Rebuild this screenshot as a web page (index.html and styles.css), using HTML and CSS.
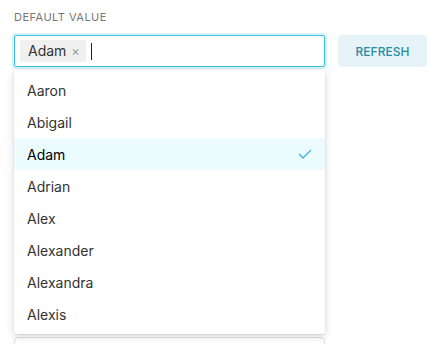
FILE: index.html
```html
<!DOCTYPE html>
<html lang="en">
<head>
  <meta charset="UTF-8" />
  <title>Default value</title>
  <link rel="stylesheet" href="styles.css">
</head>
<body>
  <div class="field">
    <label class="label">Default value</label>
    <div class="row">
      <div class="picker">
        <div class="input">
          <span class="tag">Adam <span class="tag-x">&times;</span></span>
          <span class="caret"></span>
        </div>
        <ul class="menu">
          <li>Aaron</li>
          <li>Abigail</li>
          <li class="selected">Adam
            <svg class="check" width="14" height="10" viewBox="0 0 14 10"><path d="M1 5l4 4 8-8" fill="none" stroke="#3bb8d9" stroke-width="1.4"/></svg>
          </li>
          <li>Adrian</li>
          <li>Alex</li>
          <li>Alexander</li>
          <li>Alexandra</li>
          <li>Alexis</li>
        </ul>
      </div>
      <button class="refresh">Refresh</button>
    </div>
  </div>
  <div class="next-box"></div>
</body>
</html>
```

FILE: styles.css
```css
body {
  margin: 0;
  padding: 10px 7px 0 14px;
  font-family: Inter, "Noto Sans", sans-serif;
  background: #fff;
  color: #222;
  overflow: hidden;
}
.label {
  display: block;
  font-size: 11px;
  letter-spacing: 0.5px;
  text-transform: uppercase;
  color: #777;
  line-height: 14px;
  margin-bottom: 11px;
}
.row {
  display: flex;
  gap: 13px;
}
.picker {
  position: relative;
  width: 311px;
  flex-shrink: 0;
}
.input {
  box-sizing: border-box;
  height: 32px;
  border: 1px solid #3cc3df;
  border-radius: 2px;
  box-shadow: 0 0 0 2px #d6f1f8;
  display: flex;
  align-items: center;
  padding: 0 5px;
  gap: 5px;
}
.tag {
  background: #f0f0f0;
  border-radius: 2px;
  font-size: 14px;
  color: #333;
  padding: 3px 6px 3px 8px;
  line-height: 16px;
}
.tag-x {
  color: #999;
  font-size: 13px;
  margin-left: 1px;
}
.caret {
  width: 1px;
  height: 17px;
  background: #222;
}
.menu {
  position: absolute;
  top: 35px;
  left: 0;
  right: 0;
  margin: 0;
  padding: 4px 0;
  list-style: none;
  background: #fff;
  border-radius: 3px;
  box-shadow: 0 2px 10px rgba(0, 0, 0, 0.15), 0 1px 2px rgba(0, 0, 0, 0.1);
  z-index: 5;
}
.menu li {
  display: flex;
  justify-content: space-between;
  align-items: center;
  height: 32px;
  padding: 0 13px;
  font-size: 14px;
  color: #333;
}
.menu li.selected {
  background: #ecfcfe;
  color: #000;
}
.refresh {
  width: 89px;
  height: 32px;
  border: none;
  border-radius: 4px;
  background: #e6f4f9;
  color: #2a8aa6;
  font-family: Inter, sans-serif;
  font-size: 12px;
  font-weight: 500;
  text-transform: uppercase;
}
.next-box {
  width: 311px;
  height: 40px;
  margin-top: 270px;
  border: 1px solid #ddd;
  border-radius: 4px;
  box-sizing: border-box;
}
```
